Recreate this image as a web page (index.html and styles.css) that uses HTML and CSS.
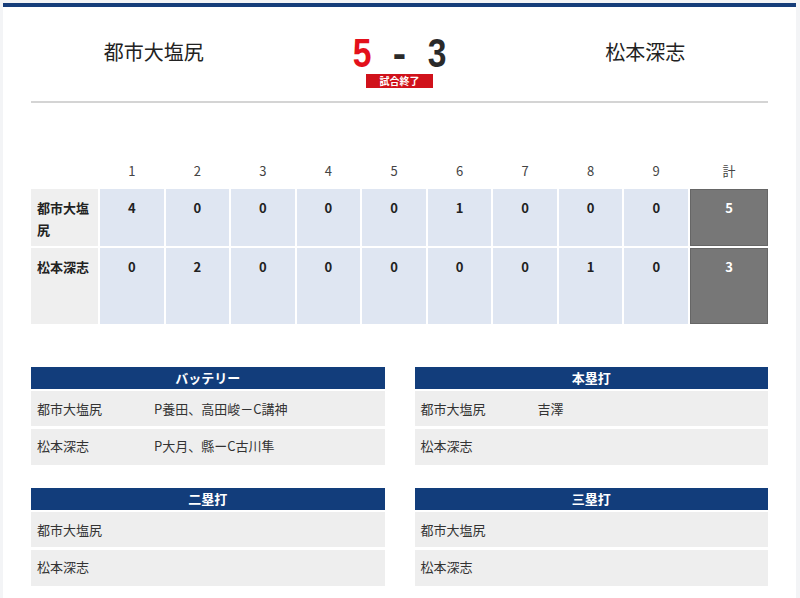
FILE: index.html
```html
<!DOCTYPE html>
<html lang="ja">
<head>
<meta charset="utf-8">
<title>試合結果</title>
<link rel="stylesheet" href="styles.css">
</head>
<body>
<div class="page">
  <div class="scorehead">
    <div class="team">都市大塩尻</div>
    <div class="center">
      <div class="score"><span class="num win">5</span><span class="dash">-</span><span class="num">3</span></div>
      <div class="badge">試合終了</div>
    </div>
    <div class="team">松本深志</div>
  </div>
  <div class="rule"></div>

  <div class="linescore">
    <div class="hcell"></div>
    <div class="hcell">1</div><div class="hcell">2</div><div class="hcell">3</div>
    <div class="hcell">4</div><div class="hcell">5</div><div class="hcell">6</div>
    <div class="hcell">7</div><div class="hcell">8</div><div class="hcell">9</div>
    <div class="hcell">計</div>

    <div class="tcell r1">都市大塩尻</div>
    <div class="cell r1">4</div><div class="cell r1">0</div><div class="cell r1">0</div>
    <div class="cell r1">0</div><div class="cell r1">0</div><div class="cell r1">1</div>
    <div class="cell r1">0</div><div class="cell r1">0</div><div class="cell r1">0</div>
    <div class="total r1">5</div>

    <div class="tcell r2">松本深志</div>
    <div class="cell r2">0</div><div class="cell r2">2</div><div class="cell r2">0</div>
    <div class="cell r2">0</div><div class="cell r2">0</div><div class="cell r2">0</div>
    <div class="cell r2">0</div><div class="cell r2">1</div><div class="cell r2">0</div>
    <div class="total r2">3</div>
  </div>

  <div class="details">
    <div class="box">
      <div class="boxhead">バッテリー</div>
      <div class="row first"><span class="rteam">都市大塩尻</span><span>P養田、高田峻－C講神</span></div>
      <div class="row second"><span class="rteam">松本深志</span><span>P大月、縣ーC古川隼</span></div>
    </div>
    <div class="box">
      <div class="boxhead">本塁打</div>
      <div class="row first"><span class="rteam">都市大塩尻</span><span>吉澤</span></div>
      <div class="row second"><span class="rteam">松本深志</span><span></span></div>
    </div>
    <div class="box">
      <div class="boxhead">二塁打</div>
      <div class="row first"><span class="rteam">都市大塩尻</span><span></span></div>
      <div class="row second"><span class="rteam">松本深志</span><span></span></div>
    </div>
    <div class="box">
      <div class="boxhead">三塁打</div>
      <div class="row first"><span class="rteam">都市大塩尻</span><span></span></div>
      <div class="row second"><span class="rteam">松本深志</span><span></span></div>
    </div>
  </div>
</div>
</body>
</html>
```

FILE: styles.css
```css
* { box-sizing: border-box; }
html, body { height: 100%; }
body {
  margin: 0;
  padding: 3px 4px 0 3px;
  background: #f3f4f6;
  font-family: "Noto Sans CJK JP", "Noto Sans", sans-serif;
  color: #333;
}
.page {
  background: #fff;
  border-top: 4px solid #163d7a;
  padding: 0 28px 20px;
  min-height: 100%;
}
.scorehead {
  display: grid;
  grid-template-columns: 1fr 1fr 1fr;
  padding-top: 26px;
}
.team {
  text-align: center;
  font-size: 20px;
  line-height: 38px;
  color: #222;
}
.center {
  display: flex;
  flex-direction: column;
  align-items: center;
}
.score {
  display: flex;
  align-items: center;
  gap: 20px;
  font-family: "Liberation Sans", Arial, sans-serif;
  font-weight: bold;
  font-size: 40px;
  line-height: 40px;
  color: #2a2a2a;
}
.num {
  display: inline-block;
  transform: scaleX(0.84);
}
.num.win { color: #e3101b; }
.dash { display: inline-block; }
.badge {
  margin-top: 1px;
  width: 67px;
  height: 14px;
  background: #d0121b;
  color: #fff;
  font-size: 10px;
  font-weight: bold;
  line-height: 14px;
  text-align: center;
}
.rule {
  margin-top: 13px;
  border-top: 2px solid #d4d4d4;
}
.linescore {
  display: grid;
  grid-template-columns: 67px repeat(9, 1fr) 78px;
  grid-template-rows: 27px 57px 76px;
  gap: 2px;
  margin-top: 57px;
  font-size: 13px;
}
.hcell {
  text-align: center;
  line-height: 22px;
  color: #444;
}
.tcell {
  background: #efefef;
  font-weight: bold;
  padding: 8px 6px 0;
  line-height: 22px;
  color: #222;
}
.cell {
  background: #dfe6f2;
  text-align: center;
  font-weight: bold;
  padding-top: 8px;
  line-height: 22px;
  color: #222;
}
.total {
  background: #777;
  border: 1px solid #666;
  color: #fff;
  text-align: center;
  font-weight: bold;
  padding-top: 7px;
  line-height: 22px;
}
.details {
  display: grid;
  grid-template-columns: 1fr 1fr;
  column-gap: 30px;
  row-gap: 23px;
  margin-top: 43px;
}
.boxhead {
  background: #123d7b;
  color: #fff;
  font-weight: bold;
  font-size: 13px;
  line-height: 22px;
  height: 22px;
  text-align: center;
}
.row {
  display: flex;
  align-items: center;
  background: #eeeeee;
  margin-top: 2px;
  padding: 0 6px 1px;
  font-size: 13px;
  color: #333;
}
.row.first { height: 35px; }
.row.second { height: 36px; margin-top: 3px; padding-bottom: 3px; }
.rteam { width: 117px; flex: none; }
```
